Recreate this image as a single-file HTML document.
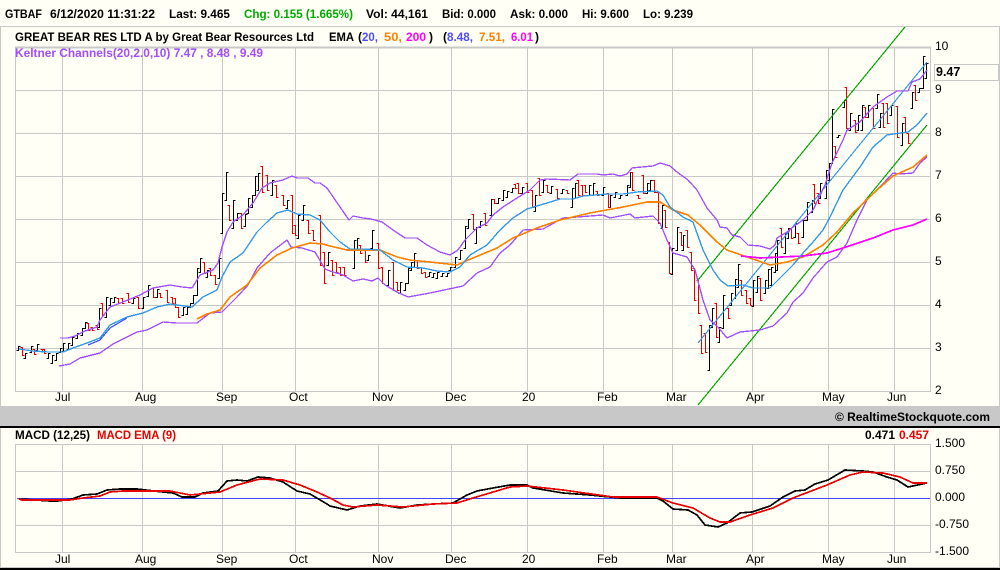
<!DOCTYPE html>
<html><head><meta charset="utf-8"><title>GTBAF</title>
<style>
html,body{margin:0;padding:0;background:#fffff6;width:1000px;height:570px;overflow:hidden}
svg{display:block}
text{font-family:"Liberation Sans",Arial,sans-serif;font-size:12px;fill:#000}
.b{font-weight:bold}
</style></head><body>
<svg width="1000" height="570" viewBox="0 0 1000 570" xmlns="http://www.w3.org/2000/svg">
<rect width="1000" height="570" fill="#fffff6"/>
<g fill="#c8c8c8" shape-rendering="crispEdges">
<rect x="0" y="26" width="1000" height="1"/>
<rect x="0" y="26" width="1" height="380"/>
<rect x="0" y="428" width="1" height="140"/>
<rect x="999" y="26" width="1" height="380"/>
<rect x="999" y="428" width="1" height="140"/>
<rect x="0" y="406" width="1000" height="20"/>
<rect x="0" y="567" width="1000" height="1"/>
</g>
<rect x="0" y="426" width="1000" height="2" fill="#000"/>
<rect x="0" y="568" width="1000" height="2" fill="#000"/>

<g stroke="#c8c8c8" stroke-width="1" fill="none" shape-rendering="crispEdges">
<path d="M15 47.5H931" stroke-width="2"/>
<path d="M15.5 47V391.5H930.5V47"/>
<path d="M15 90.5H930M15 133.5H930M15 176.5H930M15 219.5H930M15 262.5H930M15 305.5H930M15 348.5H930"/>
<path d="M62.5 47V391M142.5 47V391M222.5 47V391M295.5 47V391M378.5 47V391M451.5 47V391M527.5 47V391M603.5 47V391M672.5 47V391M752.5 47V391M828.5 47V391M894.5 47V391"/>
<path d="M15.5 444.5H930.5V552.5H15.5Z"/>
<path d="M15 471.5H930M15 525.5H930"/>
<path d="M62.5 444V552M142.5 444V552M222.5 444V552M295.5 444V552M378.5 444V552M451.5 444V552M527.5 444V552M603.5 444V552M672.5 444V552M752.5 444V552M828.5 444V552M894.5 444V552"/>
<rect x="934.5" y="64.5" width="64" height="16"/>
</g>

<!-- price bars -->
<g transform="translate(.5 .5)" fill="none" stroke-width="1" shape-rendering="crispEdges">
<path stroke="#000" d="M20 346h-2V350h-2M27 353h-2V358h-2M33 346h-2V352h-2M39 344h-2V350h-2M50 353h-2V358h-2M54 355h-2V363h-2M58 353h-2V360h-2M62 348h-2V352h-2M65 343h-2V351h-2M70 343h-2V349h-2M74 337h-2V345h-2M79 333h-2V338h-2M84 328h-2V335h-2M87 322h-2V328h-2M101 308h-2V327h-2M108 297h-2V317h-2M112 298h-2V305h-2M116 297h-2V302h-2M135 298h-2V303h-2M145 297h-2V308h-2M150 285h-2V296h-2M159 289h-2V297h-2M185 307h-2V315h-2M189 307h-2V314h-2M192 303h-2V307h-2M195 295h-2V303h-2M199 268h-2V295h-2M202 258h-2V272h-2M209 270h-2V277h-2M221 258h-2V278h-2M224 193h-2V233h-2M228 172h-2V200h-2M235 200h-2V228h-2M239 213h-2V220h-2M247 214h-2V226h-2M250 198h-2V213h-2M254 195h-2V207h-2M257 176h-2V195h-2M260 173h-2V190h-2M274 180h-2V195h-2M289 200h-2V208h-2M300 215h-2V238h-2M305 205h-2V220h-2M330 252h-2V265h-2M356 240h-2V268h-2M359 238h-2V250h-2M370 255h-2V260h-2M374 230h-2V248h-2M390 270h-2V285h-2M402 282h-2V293h-2M407 283h-2V290h-2M410 268h-2V283h-2M413 262h-2V270h-2M416 253h-2V267h-2M431 272h-2V276h-2M435 273h-2V277h-2M439 272h-2V278h-2M444 273h-2V276h-2M449 273h-2V276h-2M452 267h-2V270h-2M457 257h-2V267h-2M462 250h-2V259h-2M467 226h-2V248h-2M470 219h-2V228h-2M478 227h-2V243h-2M482 221h-2V227h-2M493 199h-2V215h-2M500 198h-2V203h-2M505 190h-2V200h-2M509 191h-2V197h-2M514 188h-2V192h-2M524 187h-2V193h-2M537 195h-2V211h-2M545 180h-2V192h-2M553 186h-2V193h-2M564 189h-2V193h-2M574 188h-2V207h-2M577 183h-2V198h-2M591 185h-2V195h-2M595 183h-2V195h-2M605 187h-2V195h-2M612 195h-2V207h-2M617 192h-2V197h-2M622 195h-2V198h-2M629 185h-2V195h-2M632 172h-2V187h-2M649 183h-2V193h-2M652 180h-2V190h-2M664 205h-2V228h-2M674 248h-2V274h-2M679 227h-2V250h-2M685 235h-2V250h-2M711 325h-2V370h-2M714 308h-2V327h-2M721 327h-2V342h-2M725 295h-2V328h-2M733 293h-2V305h-2M737 279h-2V298h-2M740 264h-2V287h-2M755 280h-2V306h-2M759 276h-2V292h-2M767 280h-2V293h-2M770 269h-2V288h-2M773 267h-2V285h-2M777 253h-2V272h-2M779 240h-2V270h-2M787 233h-2V253h-2M790 228h-2V238h-2M797 223h-2V237h-2M805 220h-2V237h-2M809 202h-2V220h-2M814 200h-2V212h-2M822 183h-2V198h-2M828 170h-2V198h-2M831 163h-2V180h-2M834 109h-2V163h-2M840 135h-2V137h-2M846 100h-2V107h-2M852 113h-2V130h-2M860 115h-2V130h-2M864 105h-2V130h-2M870 105h-2V117h-2M879 94h-2V108h-2M882 113h-2V127h-2M893 105h-2V115h-2M904 123h-2V145h-2M914 92h-2V108h-2M921 88h-2V92h-2M925 56h-2V88h-2M928 63h-2V78h-2"/>
<path stroke="#e80000" d="M20 347h2V355h2M32 349h2V354h2M40 349h2V351h2M42 349h2V353h2M86 323h2V330h2M90 327h2V330h2M95 325h2V329h2M100 303h2V315h2M116 298h2V303h2M120 298h2V303h2M126 293h2V302h2M136 297h2V308h2M151 288h2V297h2M158 293h2V297h2M165 290h2V302h2M170 297h2V303h2M173 298h2V307h2M176 307h2V317h2M202 262h2V273h2M208 268h2V275h2M213 275h2V284h2M227 205h2V220h2M239 213h2V228h2M260 166h2V192h2M265 175h2V190h2M274 185h2V197h2M281 195h2V205h2M290 195h2V233h2M293 225h2V235h2M306 220h2V233h2M311 230h2V240h2M318 215h2V265h2M322 252h2V283h2M330 260h2V275h2M334 262h2V272h2M338 267h2V275h2M342 267h2V275h2M358 245h2V253h2M363 250h2V262h2M376 243h2V268h2M380 267h2V283h2M391 262h2V290h2M395 282h2V290h2M415 260h2V268h2M419 267h2V273h2M423 272h2V277h2M471 214h2V229h2M483 213h2V225h2M492 199h2V203h2M513 184h2V188h2M516 183h2V193h2M525 183h2V192h2M530 190h2V207h2M537 178h2V195h2M545 185h2V192h2M555 189h2V198h2M565 190h2V193h2M576 180h2V195h2M580 185h2V195h2M583 185h2V192h2M595 191h2V195h2M606 193h2V207h2M630 172h2V190h2M636 195h2V198h2M641 175h2V193h2M652 180h2V192h2M656 192h2V223h2M663 210h2V227h2M667 242h2V273h2M679 232h2V245h2M685 230h2V247h2M689 252h2V270h2M692 268h2V300h2M696 280h2V313h2M699 325h2V353h2M703 333h2V352h2M714 303h2V337h2M726 308h2V318h2M739 280h2V295h2M744 290h2V303h2M748 298h2V305h2M758 278h2V300h2M779 228h2V247h2M789 228h2V238h2M796 233h2V243h2M812 184h2V203h2M816 193h2V203h2M833 146h2V157h2M844 87h2V128h2M853 120h2V132h2M863 107h2V117h2M871 108h2V128h2M881 103h2V127h2M885 103h2V123h2M895 106h2V137h2M903 117h2V132h2M906 133h2V143h2M913 85h2V100h2"/>
</g>

<!-- trend channel -->
<g fill="none" shape-rendering="crispEdges" stroke-width="1.2">
<path stroke="#00a800" d="M698 280L905 27M698 405L927 125"/>
<path stroke="#3399e6" d="M698 343L927 62"/>
</g>

<!-- moving averages and channels -->
<g fill="none" shape-rendering="crispEdges" stroke-linejoin="round">
<path stroke="#4455ee" stroke-width="1.3" d="M88 345L100 340L110 328L127 318"/>
<polyline stroke="#a24dff" stroke-width="1.35" points="60,338 68,338 75,336 85,331 97,327 100,320 110,307 123,302 140,295 153,288 170,285 182,287 192,288 197,280 200,275 213,270 218,263 222,247 227,232 233,222 243,215 253,203 262,188 270,183 283,180 292,176 297,178 308,178 315,183 320,183 327,188 340,207 349,220 353,216 363,218 371,219 382,222 393,230 405,238 417,238 427,245 440,252 450,255 458,250 465,240 477,228 487,223 493,215 503,207 517,198 530,190 540,180 547,179 570,180 578,174 597,174 603,175 613,174 620,176 627,174 632,168 642,167 653,166 660,163 670,166 677,172 688,180 697,190 707,208 717,220 720,227 727,228 732,235 740,237 748,245 760,246 770,249 775,245 777,238 787,232 793,227 803,220 813,210 825,185 832,163 843,140 847,130 860,122 873,107 887,97 897,91 908,91 912,82 920,79 927,70"/>
<polyline stroke="#a24dff" stroke-width="1.35" points="59,366 70,364 80,358 100,353 113,344 137,332 147,330 163,322 177,323 197,323 210,313 222,312 237,297 248,285 257,268 270,253 287,240 291,247 302,248 315,252 325,269 330,271 343,275 353,281 363,279 372,281 378,278 385,285 397,292 408,297 430,293 463,286 477,273 490,267 500,253 510,245 523,230 543,229 563,218 577,217 603,215 610,218 630,214 635,218 653,216 660,223 667,240 673,253 687,257 695,270 703,300 710,320 718,327 727,338 740,332 760,330 773,326 787,313 793,302 803,293 813,278 827,262 837,257 847,243 857,220 867,200 877,190 893,173 900,174 913,173 920,163 927,157"/>
<polyline stroke="#ff8000" stroke-width="1.6" points="197,319 207,314 220,310 230,297 247,285 260,268 277,255 292,248 310,243 323,244 330,246 347,250 380,250 397,257 410,260 430,262 457,265 473,258 497,248 513,238 537,228 560,220 590,213 623,207 647,202 660,202 673,210 688,215 700,225 717,242 727,250 750,258 770,265 787,262 803,257 823,245 837,232 853,213 877,190 893,176 913,167 927,155"/>
<polyline stroke="#ff00ff" stroke-width="1.7" points="741,256 760,258 803,256 827,253 843,248 873,238 893,230 913,225 927,219"/>
<polyline stroke="#3399e6" stroke-width="1.4" points="19,349 33,351 47,352 63,352 73,348 87,343 100,338 110,325 127,317 143,313 157,307 170,304 192,307 203,297 217,290 222,277 230,262 243,253 257,232 267,222 277,213 288,210 297,214 310,215 320,220 330,232 340,242 350,249 363,249 380,250 393,260 407,267 423,268 437,271 450,272 460,267 470,255 487,245 500,230 513,218 527,209 547,203 560,199 573,199 583,196 607,194 623,194 637,192 657,191 663,195 670,207 683,217 693,222 703,250 713,270 720,280 728,286 743,285 753,288 770,288 778,280 793,265 803,253 813,242 823,230 830,217 843,190 860,167 873,147 887,135 900,133 908,132 917,125 927,113"/>
</g>

<!-- MACD -->
<path d="M17 498.5H930" stroke="#4444ff" stroke-width="1" shape-rendering="crispEdges"/>
<g fill="none" stroke-width="1.7" shape-rendering="crispEdges">
<polyline stroke="#000" points="19,499 50,501 58,501 72,499 83,495 97,494 107,490 120,489 137,489 163,492 173,493 182,497 195,497 203,493 218,491 227,481 237,480 247,481 258,477 270,478 283,482 297,491 310,494 327,504 330,506 347,510 360,506 377,504 400,508 417,505 433,504 453,503 467,495 477,491 493,488 510,485 527,485 533,488 563,493 590,495 620,498 657,498 663,501 673,509 688,510 697,515 705,525 718,527 727,523 740,513 752,512 770,506 783,497 795,491 805,490 815,484 828,480 845,470 863,471 873,472 887,477 897,480 908,487 927,483"/>
<polyline stroke="#e80000" points="19,499 22,500 70,500 83,498 100,496 110,492 123,491 170,491 190,495 220,492 237,485 260,479 283,480 300,485 317,492 330,498 343,505 353,507 377,505 403,507 433,504 457,503 473,498 510,487 527,486 563,490 613,497 657,497 673,503 693,508 710,518 720,522 730,522 750,515 773,508 793,498 827,485 850,475 863,472 883,473 900,477 913,483 927,483"/>
</g>

<!-- header text -->
<g class="b">
<text class="b" x="5" y="18" textLength="37" lengthAdjust="spacingAndGlyphs">GTBAF</text>
<text class="b" x="50" y="18" textLength="105" lengthAdjust="spacingAndGlyphs">6/12/2020 11:31:22</text>
<text class="b" x="169" y="18" textLength="61" lengthAdjust="spacingAndGlyphs">Last: 9.465</text>
<text class="b" x="244" y="18" textLength="109" lengthAdjust="spacingAndGlyphs" style="fill:#00aa00">Chg: 0.155 (1.665%)</text>
<text class="b" x="366" y="18" textLength="62" lengthAdjust="spacingAndGlyphs">Vol: 44,161</text>
<text class="b" x="442" y="18" textLength="54" lengthAdjust="spacingAndGlyphs">Bid: 0.000</text>
<text class="b" x="510" y="18" textLength="58" lengthAdjust="spacingAndGlyphs">Ask: 0.000</text>
<text class="b" x="582" y="18" textLength="47" lengthAdjust="spacingAndGlyphs">Hi: 9.600</text>
<text class="b" x="643" y="18" textLength="50" lengthAdjust="spacingAndGlyphs">Lo: 9.239</text>

<text class="b" x="15" y="41" textLength="299" lengthAdjust="spacingAndGlyphs">GREAT BEAR RES LTD A by Great Bear Resources Ltd</text>
<text class="b" x="329" y="41" textLength="25" lengthAdjust="spacingAndGlyphs">EMA</text>
<text class="b" x="358" y="41">(</text>
<text class="b" x="362" y="41" textLength="16" lengthAdjust="spacingAndGlyphs" style="fill:#4d4dff">20,</text>
<text class="b" x="384" y="41" textLength="18" lengthAdjust="spacingAndGlyphs" style="fill:#ff8000">50,</text>
<text class="b" x="406" y="41" textLength="20" lengthAdjust="spacingAndGlyphs" style="fill:#ff00ff">200</text>
<text class="b" x="429" y="41">)</text>
<text class="b" x="443" y="41">(</text>
<text class="b" x="447" y="41" textLength="26" lengthAdjust="spacingAndGlyphs" style="fill:#4d4dff">8.48,</text>
<text class="b" x="479" y="41" textLength="26" lengthAdjust="spacingAndGlyphs" style="fill:#ff8000">7.51,</text>
<text class="b" x="511" y="41" textLength="22" lengthAdjust="spacingAndGlyphs" style="fill:#ff00ff">6.01</text>
<text class="b" x="535" y="41">)</text>
<text class="b" x="15" y="57" textLength="248" lengthAdjust="spacingAndGlyphs" style="fill:#a24dff">Keltner Channels(20,2.0,10) 7.47 , 8.48 , 9.49</text>
<text class="b" x="936" y="76" style="font-size:12.5px">9.47</text>
<text class="b" x="835" y="421" textLength="155" lengthAdjust="spacingAndGlyphs">© RealtimeStockquote.com</text>
<text class="b" x="15" y="439" textLength="75" lengthAdjust="spacingAndGlyphs">MACD (12,25)</text>
<text class="b" x="97" y="439" textLength="79" lengthAdjust="spacingAndGlyphs" style="fill:#e80000">MACD EMA (9)</text>
<text class="b" x="865" y="439" textLength="30" lengthAdjust="spacingAndGlyphs">0.471</text>
<text class="b" x="899" y="439" textLength="30" lengthAdjust="spacingAndGlyphs" style="fill:#e80000">0.457</text>
</g>

<!-- axis labels -->
<g>
<text x="935" y="50">10</text><text x="935" y="93">9</text><text x="935" y="136">8</text><text x="935" y="179">7</text><text x="935" y="222">6</text><text x="935" y="265">5</text><text x="935" y="308">4</text><text x="935" y="351">3</text><text x="935" y="394">2</text>
<text x="935" y="447">1.500</text><text x="935" y="474">0.750</text><text x="935" y="501">0.000</text><text x="935" y="528">-0.750</text><text x="935" y="555">-1.500</text>
<text x="55" y="401">Jul</text><text x="135" y="401">Aug</text><text x="216" y="401">Sep</text><text x="289" y="401">Oct</text><text x="372" y="401">Nov</text><text x="445" y="401">Dec</text><text x="522" y="401">20</text><text x="597" y="401">Feb</text><text x="666" y="401">Mar</text><text x="746" y="401">Apr</text><text x="822" y="401">May</text><text x="887" y="401">Jun</text>
<text x="55" y="563">Jul</text><text x="135" y="563">Aug</text><text x="216" y="563">Sep</text><text x="289" y="563">Oct</text><text x="372" y="563">Nov</text><text x="445" y="563">Dec</text><text x="522" y="563">20</text><text x="597" y="563">Feb</text><text x="666" y="563">Mar</text><text x="746" y="563">Apr</text><text x="822" y="563">May</text><text x="887" y="563">Jun</text>
</g>
</svg>
</body></html>
